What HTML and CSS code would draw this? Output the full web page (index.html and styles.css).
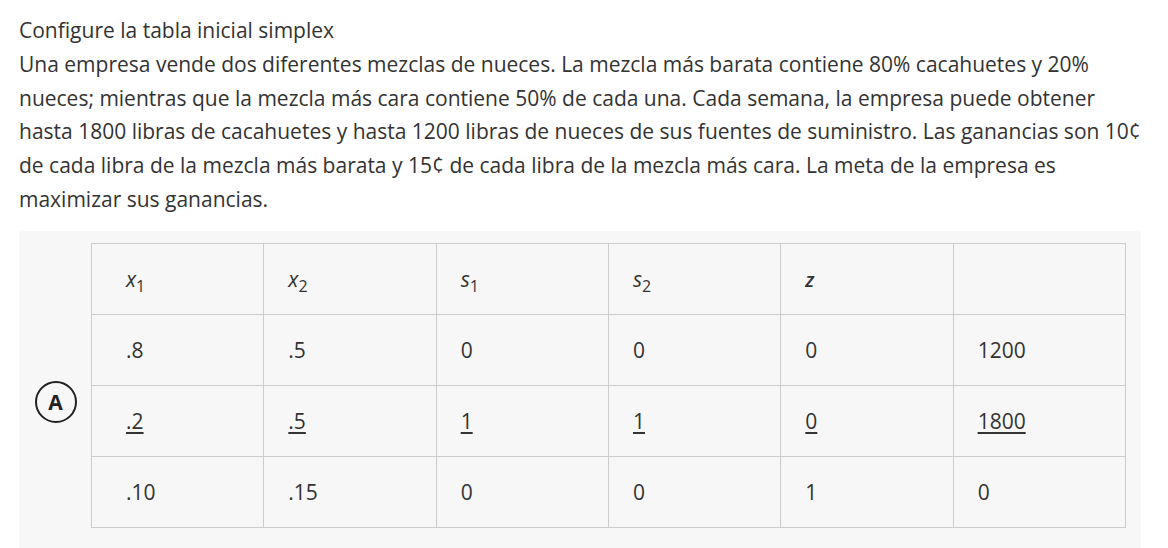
FILE: index.html
```html
<!DOCTYPE html>
<html lang="es">
<head>
<meta charset="utf-8">
<link rel="stylesheet" href="styles.css">
</head>
<body>
<div class="page">
  <p class="question">Configure la tabla inicial simplex<br>Una empresa vende dos diferentes mezclas de nueces. La mezcla más barata contiene 80% cacahuetes y 20% nueces; mientras que la mezcla más cara contiene 50% de cada una. Cada semana, la empresa puede obtener hasta 1800 libras de cacahuetes y hasta 1200 libras de nueces de sus fuentes de suministro. Las ganancias son 10¢ de cada libra de la mezcla más barata y 15¢ de cada libra de la mezcla más cara. La meta de la empresa es maximizar sus ganancias.</p>
  <div class="option">
    <div class="label"><span class="circle">A</span></div>
    <div class="table-wrap">
      <table class="tableau">
        <tr>
          <td><i>x</i><sub>1</sub></td>
          <td><i>x</i><sub>2</sub></td>
          <td><i>s</i><sub>1</sub></td>
          <td><i>s</i><sub>2</sub></td>
          <td><i class="z">z</i></td>
          <td></td>
        </tr>
        <tr>
          <td>.8</td><td>.5</td><td>0</td><td>0</td><td>0</td><td>1200</td>
        </tr>
        <tr>
          <td><u>.2</u></td><td><u>.5</u></td><td><u>1</u></td><td><u>1</u></td><td><u>0</u></td><td><u>1800</u></td>
        </tr>
        <tr>
          <td>.10</td><td>.15</td><td>0</td><td>0</td><td>1</td><td>0</td>
        </tr>
      </table>
    </div>
  </div>
</div>
</body>
</html>
```
FILE: styles.css
```css
html, body {
  margin: 0;
  padding: 0;
  background: #fff;
}
.page {
  padding: 14px 27px 0 19px;
  font-family: "Open Sans", "Noto Sans", sans-serif;
  color: #333;
  font-size: 21px;
}
.question {
  margin: 0 0 14px 0;
  line-height: 33.8px;
}
.option {
  display: flex;
  background: #f7f7f7;
  border-radius: 3px;
  padding: 12px 15px 21px 0;
}
.label {
  width: 72px;
  flex: none;
  display: flex;
  justify-content: center;
  align-items: flex-start;
  padding-top: 138px;
}
.circle {
  box-sizing: border-box;
  width: 42px;
  height: 42px;
  border: 2.5px solid #222;
  border-radius: 50%;
  display: flex;
  align-items: center;
  justify-content: center;
  font-weight: 700;
  font-size: 21px;
  color: #222;
  margin-left: 1px;
}
.table-wrap {
  flex: 1;
}
.tableau {
  width: 100%;
  border-collapse: collapse;
  table-layout: fixed;
}
.tableau td {
  border: 1px solid #ccc;
  height: 71px;
  padding: 0 0 0 24px;
  box-sizing: border-box;
  font-size: 21px;
  color: #333;
  vertical-align: middle;
}
.tableau td:first-child {
  padding-left: 34px;
}
.tableau i {
  font-style: italic;
}
.tableau sub {
  font-size: 16px;
  vertical-align: -5px;
  line-height: 0;
}
.tableau .z {
  font-weight: 600;
  font-size: 20px;
}
.tableau u {
  text-decoration-thickness: 2px;
  text-underline-offset: 3px;
}
```
